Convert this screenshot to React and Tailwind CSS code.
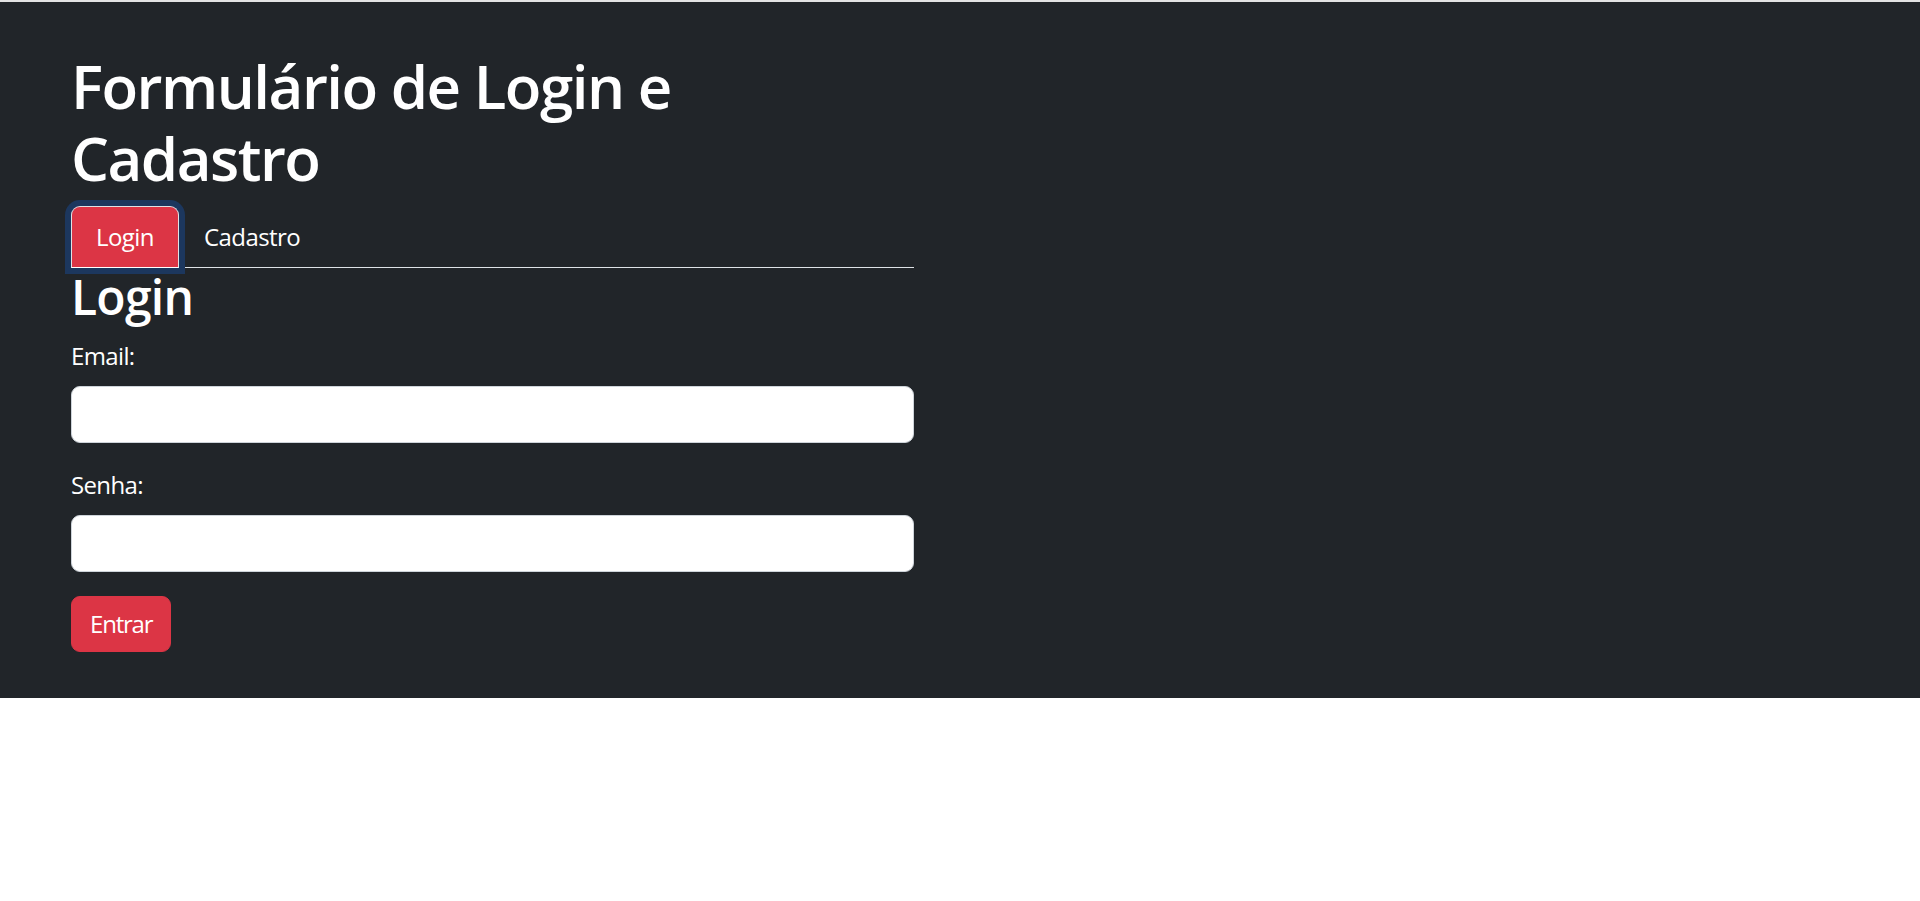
export default function App() {
  return (
    <div className="min-h-screen bg-white font-['Open_Sans',sans-serif]">
      <div className="h-[2px] bg-[#e3e3e3]" />

      {/* Form Section */}
      <div className="bg-[#212529] text-white pl-[71px] pt-[48px] pb-[46px]">
        <div className="w-[843px]">
          <h1 className="text-[60px] leading-[72px] font-semibold tracking-[-0.025em] mb-3">
            Formulário de Login e Cadastro
          </h1>

          <ul className="flex border-b border-[#dee2e6] tracking-[-0.035em]">
            <li className="-mb-px">
              <button className="px-6 py-3 text-[24px] leading-[36px] bg-[#dc3545] text-white border border-[#dee2e6] border-b-white rounded-t-[9px] shadow-[0_0_0_6px_#1c375e]">
                Login
              </button>
            </li>
            <li className="-mb-px">
              <button className="px-6 py-3 text-[24px] leading-[36px] text-white border border-transparent rounded-t-[9px]">
                Cadastro
              </button>
            </li>
          </ul>

          <h2 className="text-[48px] leading-[57.6px] font-semibold tracking-[-0.015em] mb-3">Login</h2>

          <form onSubmit={(e) => e.preventDefault()} className="tracking-[-0.04em]">
            <div className="mb-6">
              <label className="block text-[24px] leading-[36px] mb-3">Email:</label>
              <input
                type="email"
                className="block w-full h-[57px] bg-white border border-[#ced4da] rounded-[9px] px-[18px] text-[24px] text-[#212529]"
              />
            </div>
            <div className="mb-6">
              <label className="block text-[24px] leading-[36px] mb-3">Senha:</label>
              <input
                type="password"
                className="block w-full h-[57px] bg-white border border-[#ced4da] rounded-[9px] px-[18px] text-[24px] text-[#212529]"
              />
            </div>
            <button
              type="submit"
              className="px-[18px] py-[9px] text-[24px] leading-[36px] tracking-[-0.05em] bg-[#dc3545] border border-[#dc3545] text-white rounded-[9px]"
            >
              Entrar
            </button>
          </form>
        </div>
      </div>
    </div>
  );
}
